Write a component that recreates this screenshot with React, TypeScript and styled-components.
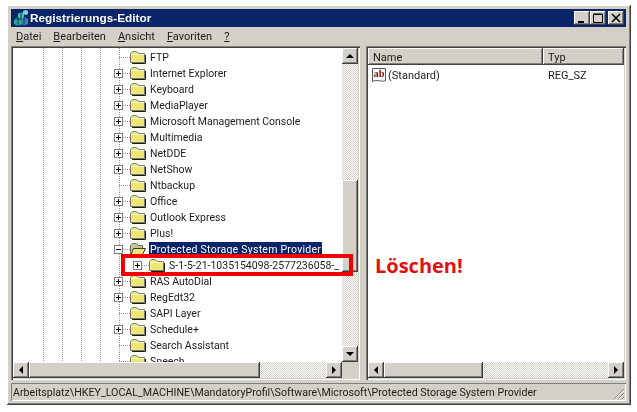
import React from "react";
import styled, { createGlobalStyle } from "styled-components";

const GlobalStyle = createGlobalStyle`
    html, body {
        margin: 0;
        padding: 0;
        background: #ffffff;
    }
    * {
        box-sizing: border-box;
    }
`;

const raised = `
    background-color: #d4d0c8;
    box-shadow: inset -1px -1px 0 #404040, inset 1px 1px 0 #ffffff, inset -2px -2px 0 #808080;
`;

const Page = styled.div`
    position: relative;
    width: 637px;
    height: 412px;
    padding: 5px 0 0 7px;
    overflow: hidden;
    font-family: Roboto, "Liberation Sans", sans-serif;
    font-size: 11px;
    color: #1c1c1c;
`;

const Window = styled.div`
    display: flex;
    flex-direction: column;
    width: 624px;
    height: 400px;
    padding: 4px 5px 0 4px;
    background-color: #d4d0c8;
    box-shadow: inset -1px -1px 0 #404040, inset 1px 1px 0 #ffffff, inset -2px -2px 0 #808080;
    filter: blur(0.3px);
`;

const TitleBar = styled.div`
    display: flex;
    align-items: center;
    height: 18px;
    padding: 0 2px 0 2px;
    background-color: #0a246a;
    color: #ffffff;
`;

const TitleText = styled.span`
    margin-left: 1px;
    font-family: "Liberation Sans", Arial, sans-serif;
    font-weight: 700;
    font-size: 11.8px;
    white-space: nowrap;
`;

const WindowButtons = styled.div`
    display: flex;
    margin-left: auto;
`;

const WindowButton = styled.div<{ $gap?: number }>`
    ${raised}
    display: flex;
    align-items: center;
    justify-content: center;
    width: 16px;
    height: 14px;
    margin-left: ${(p) => p.$gap ?? 0}px;
`;

const MenuBar = styled.div`
    display: flex;
    align-items: center;
    gap: 12px;
    height: 19px;
    padding-left: 5px;
`;

const MenuItem = styled.span`
    white-space: nowrap;
    & u {
        text-underline-offset: 1px;
    }
`;

const Panes = styled.div`
    display: flex;
    gap: 6px;
    height: 334px;
`;

const Pane = styled.div<{ $width: number }>`
    display: grid;
    grid-template-columns: ${(p) => (p.$width === 349 ? "1fr 16px" : "1fr")};
    grid-template-rows: 1fr 16px;
    width: ${(p) => p.$width}px;
    padding: 2px;
    background-color: #d4d0c8;
    box-shadow: inset 1px 1px 0 #808080, inset 2px 2px 0 #404040, inset -1px -1px 0 #ffffff;
`;

const Tree = styled.div`
    padding-top: 1px;
    overflow: hidden;
    font-size: 10.5px;
    background-color: #ffffff;
    background-image:
        linear-gradient(#9a9a9a 50%, transparent 50%),
        linear-gradient(#9a9a9a 50%, transparent 50%),
        linear-gradient(#9a9a9a 50%, transparent 50%),
        linear-gradient(#9a9a9a 50%, transparent 50%),
        linear-gradient(#9a9a9a 50%, transparent 50%);
    background-size: 1px 2px;
    background-repeat: repeat-y;
    background-position: 30px 0, 49px 0, 68px 0, 87px 0, 106px 0;
`;

const TreeRow = styled.div<{ $depth?: number }>`
    display: flex;
    align-items: center;
    height: 16px;
    padding-left: ${(p) => 101 + (p.$depth ?? 0) * 19}px;
    white-space: nowrap;
`;

const Expander = styled.div`
    position: relative;
    flex: none;
    width: 9px;
    height: 9px;
    background-color: #ffffff;
    border: 1px solid #808080;
`;

const ExpanderBar = styled.span<{ $vertical?: boolean }>`
    position: absolute;
    background-color: #000000;
    left: ${(p) => (p.$vertical ? 3 : 1)}px;
    top: ${(p) => (p.$vertical ? 1 : 3)}px;
    width: ${(p) => (p.$vertical ? 1 : 5)}px;
    height: ${(p) => (p.$vertical ? 5 : 1)}px;
`;

const Connector = styled.div<{ $width: number; $left?: number }>`
    flex: none;
    width: ${(p) => p.$width}px;
    height: 1px;
    margin-left: ${(p) => p.$left ?? 0}px;
    background-image: linear-gradient(90deg, #9a9a9a 50%, transparent 50%);
    background-size: 2px 1px;
`;

const FolderIcon = styled.svg`
    flex: none;
    display: block;
`;

const TreeLabel = styled.span<{ $selected?: boolean }>`
    margin-left: ${(p) => (p.$selected ? 3 : 4)}px;
    padding: ${(p) => (p.$selected ? "0 1px" : "0")};
    line-height: 15px;
    letter-spacing: ${(p) => (p.$selected ? "0.25px" : "normal")};
    background-color: ${(p) => (p.$selected ? "#0a246a" : "transparent")};
    color: ${(p) => (p.$selected ? "#ffffff" : "inherit")};
`;

const VerticalBar = styled.div`
    display: grid;
    grid-template-rows: 16px 116px 92px 1fr 16px;
    width: 16px;
`;

const Track = styled.div`
    background-color: #eeede9;
    background-image: repeating-conic-gradient(#ffffff 0% 25%, #d4d0c8 0% 50%);
    background-size: 2px 2px;
`;

const HorizontalBar = styled.div<{ $columns: string }>`
    display: grid;
    grid-template-columns: ${(p) => p.$columns};
    height: 16px;
`;

const ScrollPiece = styled.div`
    ${raised}
    display: flex;
    align-items: center;
    justify-content: center;
`;

const Arrow = styled.span<{ $dir: "up" | "down" | "left" | "right" }>`
    width: 0;
    height: 0;
    border-style: solid;
    border-color: transparent;
    ${(p) => p.$dir === "up" && "border-width: 0 4px 4px 4px; border-bottom-color: #000;"}
    ${(p) => p.$dir === "down" && "border-width: 4px 4px 0 4px; border-top-color: #000;"}
    ${(p) => p.$dir === "left" && "border-width: 4px 4px 4px 0; border-right-color: #000;"}
    ${(p) => p.$dir === "right" && "border-width: 4px 0 4px 4px; border-left-color: #000;"}
`;

const Corner = styled.div`
    background-color: #d4d0c8;
`;

const ListArea = styled.div`
    background-color: #ffffff;
    overflow: hidden;
`;

const ListHeader = styled.div`
    display: grid;
    grid-template-columns: 175px 1fr;
    height: 17px;
`;

const HeaderCell = styled.div`
    display: flex;
    align-items: center;
    padding: 2px 0 0 5px;
    ${raised}
`;

const ListRow = styled.div`
    display: grid;
    grid-template-columns: 175px 1fr;
    align-items: center;
    height: 19px;
    padding-top: 1px;
`;

const NameCell = styled.div`
    display: flex;
    align-items: center;
    padding-left: 3px;
    gap: 1px;
`;

const TypeCell = styled.div`
    padding-left: 5px;
`;

const StatusBar = styled.div`
    display: flex;
    align-items: center;
    position: relative;
    height: 18px;
    margin-top: 3px;
    padding-left: 2px;
    font-size: 10.65px;
    box-shadow: inset 1px 1px 0 #808080, inset -1px -1px 0 #ffffff;
    white-space: nowrap;
`;

const Grip = styled.svg`
    position: absolute;
    right: 1px;
    bottom: 1px;
`;

const Highlight = styled.div`
    position: absolute;
    left: 121px;
    top: 254px;
    width: 232px;
    height: 22px;
    border: 4px solid #ee0000;
`;

const Callout = styled.div`
    position: absolute;
    left: 375px;
    top: 252px;
    font-family: "Open Sans", "Liberation Sans", sans-serif;
    font-size: 20px;
    line-height: 28px;
    font-weight: 700;
    color: #e01010;
`;

interface TreeEntry {
    label: string;
    leaf?: boolean;
}

const topRows: TreeEntry[] = [
    { label: "FTP", leaf: true },
    { label: "Internet Explorer" },
    { label: "Keyboard" },
    { label: "MediaPlayer" },
    { label: "Microsoft Management Console" },
    { label: "Multimedia" },
    { label: "NetDDE" },
    { label: "NetShow" },
    { label: "Ntbackup", leaf: true },
    { label: "Office" },
    { label: "Outlook Express" },
    { label: "Plus!" },
];

const bottomRows: TreeEntry[] = [
    { label: "RAS AutoDial" },
    { label: "RegEdt32" },
    { label: "SAPI Layer", leaf: true },
    { label: "Schedule+" },
    { label: "Search Assistant", leaf: true },
    { label: "Speech", leaf: true },
];

const Folder = () => (
    <FolderIcon width="16" height="14" viewBox="0 0 16 14">
        <path d="M0.5 3.5 L2.5 1.5 H6.5 L8.5 3.5 H14.5 V12.5 H0.5 Z" fill="#f0e678" stroke="#7a7a6a" />
        <path d="M1 4.5 H14" stroke="#fffbd0" />
        <path d="M2 13.5 H15.5 V5" fill="none" stroke="#1a1a1a" />
    </FolderIcon>
);

const OpenFolder = () => (
    <FolderIcon width="16" height="14" viewBox="0 0 16 14">
        <path d="M0.5 3.5 L2.5 1.5 H6.5 L8.5 3.5 H12.5 V12.5 H0.5 Z" fill="#c9c49a" stroke="#6a6a5a" />
        <path d="M1 12.5 L3.5 6.5 H15.5 L12.5 12.5 Z" fill="#f0e678" stroke="#3a3a2a" />
    </FolderIcon>
);

const Row = ({ label, leaf }: TreeEntry) => (
    <TreeRow>
        {leaf ? (
            <Connector $width={11} $left={5} />
        ) : (
            <>
                <Expander>
                    <ExpanderBar />
                    <ExpanderBar $vertical />
                </Expander>
                <Connector $width={7} />
            </>
        )}
        <Folder />
        <TreeLabel>{label}</TreeLabel>
    </TreeRow>
);

const AppIcon = () => (
    <svg width="16" height="16" viewBox="0 0 16 16">
        <path d="M1 9 L5 7 L9 9 V14 L5 16 L1 14 Z" fill="#2fa7a0" />
        <path d="M8 9 L11 7 L15 9 V14 L11 16 L8 14 Z" fill="#3b7fb8" />
        <path d="M5 4 L8 2 L11 4 V8 L8 10 L5 8 Z" fill="#46c0b0" />
        <path d="M10 1 L13 0 L15 1 V4 L13 5 L10 4 Z" fill="#7fd0e0" />
        <path d="M5 7 V16 M1 9 L9 9 M11 7 V16 M8 2 V10" stroke="#06223f" strokeWidth="0.8" fill="none" />
    </svg>
);

const StringIcon = () => (
    <svg width="16" height="16" viewBox="0 0 16 16">
        <path d="M1.5 1.5 H14.5 V13.5 C11 15.5 5 12 1.5 14.5 Z" fill="#ffffff" stroke="#555555" />
        <text x="2.5" y="10" fontFamily="Liberation Serif, serif" fontWeight="700" fontSize="10.5" fill="#8b1010">
            ab
        </text>
    </svg>
);

export default function App() {
    return (
        <Page>
            <GlobalStyle />
            <Window>
                <TitleBar>
                    <AppIcon />
                    <TitleText>Registrierungs-Editor</TitleText>
                    <WindowButtons>
                        <WindowButton>
                            <svg width="10" height="10" viewBox="0 0 10 10">
                                <path d="M1 8 H7 V10 H1 Z" fill="#000" />
                            </svg>
                        </WindowButton>
                        <WindowButton>
                            <svg width="10" height="10" viewBox="0 0 10 10">
                                <path d="M0.5 1.5 H9.5 V9.5 H0.5 Z M0.5 1 H9.5" fill="none" stroke="#000" />
                            </svg>
                        </WindowButton>
                        <WindowButton $gap={2}>
                            <svg width="10" height="10" viewBox="0 0 10 10">
                                <path d="M1 1 L9 9 M9 1 L1 9" stroke="#000" strokeWidth="1.6" />
                            </svg>
                        </WindowButton>
                    </WindowButtons>
                </TitleBar>
                <MenuBar>
                    <MenuItem><u>D</u>atei</MenuItem>
                    <MenuItem><u>B</u>earbeiten</MenuItem>
                    <MenuItem><u>A</u>nsicht</MenuItem>
                    <MenuItem><u>F</u>avoriten</MenuItem>
                    <MenuItem><u>?</u></MenuItem>
                </MenuBar>
                <Panes>
                    <Pane $width={349}>
                        <Tree>
                            {topRows.map((r) => (
                                <Row key={r.label} {...r} />
                            ))}
                            <TreeRow>
                                <Expander>
                                    <ExpanderBar />
                                </Expander>
                                <Connector $width={7} />
                                <OpenFolder />
                                <TreeLabel $selected>Protected Storage System Provider</TreeLabel>
                            </TreeRow>
                            <TreeRow $depth={1}>
                                <Expander>
                                    <ExpanderBar />
                                    <ExpanderBar $vertical />
                                </Expander>
                                <Connector $width={7} />
                                <Folder />
                                <TreeLabel>S-1-5-21-1035154098-2577236058-_</TreeLabel>
                            </TreeRow>
                            {bottomRows.map((r) => (
                                <Row key={r.label} {...r} />
                            ))}
                        </Tree>
                        <VerticalBar>
                            <ScrollPiece><Arrow $dir="up" /></ScrollPiece>
                            <Track />
                            <ScrollPiece />
                            <Track />
                            <ScrollPiece><Arrow $dir="down" /></ScrollPiece>
                        </VerticalBar>
                        <HorizontalBar $columns="16px 231px 1fr 16px">
                            <ScrollPiece><Arrow $dir="left" /></ScrollPiece>
                            <ScrollPiece />
                            <Track />
                            <ScrollPiece><Arrow $dir="right" /></ScrollPiece>
                        </HorizontalBar>
                        <Corner />
                    </Pane>
                    <Pane $width={260}>
                        <ListArea>
                            <ListHeader>
                                <HeaderCell>Name</HeaderCell>
                                <HeaderCell>Typ</HeaderCell>
                            </ListHeader>
                            <ListRow>
                                <NameCell>
                                    <StringIcon />
                                    (Standard)
                                </NameCell>
                                <TypeCell>REG_SZ</TypeCell>
                            </ListRow>
                        </ListArea>
                        <HorizontalBar $columns="16px 99px 1fr 16px">
                            <ScrollPiece><Arrow $dir="left" /></ScrollPiece>
                            <ScrollPiece />
                            <Track />
                            <ScrollPiece><Arrow $dir="right" /></ScrollPiece>
                        </HorizontalBar>
                    </Pane>
                </Panes>
                <StatusBar>
                    Arbeitsplatz\HKEY_LOCAL_MACHINE\MandatoryProfil\Software\Microsoft\Protected Storage System Provider
                    <Grip width="12" height="12" viewBox="0 0 12 12">
                        <path d="M11 1 L1 11 M11 5 L5 11 M11 9 L9 11" stroke="#808080" fill="none" />
                        <path d="M11 2 L2 11 M11 6 L6 11 M11 10 L10 11" stroke="#ffffff" fill="none" />
                    </Grip>
                </StatusBar>
            </Window>
            <Highlight />
            <Callout>Löschen!</Callout>
        </Page>
    );
}
